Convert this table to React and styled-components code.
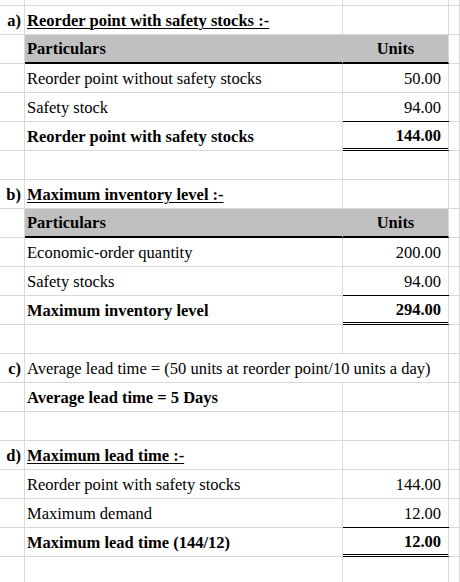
import styled, { createGlobalStyle } from 'styled-components';

const GRID = '#d9d9d9';

const sections = [
  { kind: 'heading', label: 'a)', text: 'Reorder point with safety stocks :-' },
  { kind: 'header' },
  { kind: 'line', text: 'Reorder point without safety stocks', value: '50.00' },
  { kind: 'line', text: 'Safety stock', value: '94.00' },
  { kind: 'total', text: 'Reorder point with safety stocks', value: '144.00' },
  { kind: 'blank' },
  { kind: 'heading', label: 'b)', text: 'Maximum inventory level :-' },
  { kind: 'header' },
  { kind: 'line', text: 'Economic-order quantity', value: '200.00' },
  { kind: 'line', text: 'Safety stocks', value: '94.00' },
  { kind: 'total', text: 'Maximum inventory level', value: '294.00' },
  { kind: 'blank' },
  { kind: 'wide', label: 'c)', text: 'Average lead time = (50 units at reorder point/10 units a day)' },
  { kind: 'note', text: 'Average lead time = 5 Days' },
  { kind: 'blank' },
  { kind: 'heading', label: 'd)', text: 'Maximum lead time :-' },
  { kind: 'line', text: 'Reorder point with safety stocks', value: '144.00' },
  { kind: 'line', text: 'Maximum demand', value: '12.00' },
  { kind: 'total', text: 'Maximum lead time (144/12)', value: '12.00' },
  { kind: 'blank' },
];

export default function App() {
  return (
    <>
      <GlobalStyle />
      <Sheet>
        <Row $h={6}>
          <Cell /><Cell /><Cell /><Cell />
        </Row>
        {sections.map((r, i) => {
          if (r.kind === 'header') {
            return (
              <Row key={i}>
                <Cell />
                <HeaderCell $first>Particulars</HeaderCell>
                <HeaderCell $align="center">Units</HeaderCell>
                <Cell />
              </Row>
            );
          }
          if (r.kind === 'wide') {
            return (
              <Row key={i}>
                <Label>{r.label}</Label>
                <Cell $span={2}>{r.text}</Cell>
                <Cell />
              </Row>
            );
          }
          return (
            <Row key={i}>
              <Label>{r.label}</Label>
              {r.kind === 'heading' ? (
                <Cell $bold><Underlined>{r.text}</Underlined></Cell>
              ) : (
                <Cell $bold={r.kind === 'total' || r.kind === 'note'}>{r.text}</Cell>
              )}
              {r.kind === 'total' ? (
                <TotalCell>{r.value}</TotalCell>
              ) : (
                <Cell $align="right">{r.value}</Cell>
              )}
              <Cell />
            </Row>
          );
        })}
      </Sheet>
    </>
  );
}

const GlobalStyle = createGlobalStyle`
  body {
    margin: 0;
    background: #fff;
    color: #000;
    font-family: "Liberation Serif", "Times New Roman", serif;
  }
`;

const Sheet = styled.div`
  width: 460px;
  height: 582px;
  overflow: hidden;
`;

const Row = styled.div`
  display: grid;
  grid-template-columns: 25px 318px 106px 1fr;
  height: ${p => p.$h || 29}px;
`;

const Cell = styled.div`
  box-sizing: border-box;
  grid-column: span ${p => p.$span || 1};
  border-right: 1px solid ${GRID};
  border-bottom: 1px solid ${GRID};
  display: flex;
  align-items: center;
  justify-content: ${p => (p.$align === 'right' ? 'flex-end' : p.$align === 'center' ? 'center' : 'flex-start')};
  padding: 1px ${p => (p.$align === 'right' ? '7px' : '2px')} 0 2px;
  font-size: 16.5px;
  font-weight: ${p => (p.$bold ? 700 : 400)};
  white-space: nowrap;
`;

const Label = styled(Cell)`
  justify-content: flex-end;
  padding-right: 3px;
  font-weight: 700;
`;

const Underlined = styled.span`
  text-decoration: underline;
  text-decoration-thickness: 1px;
  text-underline-offset: 2px;
`;

const HeaderCell = styled(Cell)`
  background: #c0c0c0;
  font-weight: 700;
  border-right-color: ${p => (p.$first ? '#c0c0c0' : GRID)};
  border-bottom: 2px solid #000;
`;

const TotalCell = styled(Cell)`
  justify-content: flex-end;
  padding-right: 7px;
  font-weight: 700;
  box-shadow: 0 -1px 0 #000;
  border-bottom: 3px double #000;
`;
